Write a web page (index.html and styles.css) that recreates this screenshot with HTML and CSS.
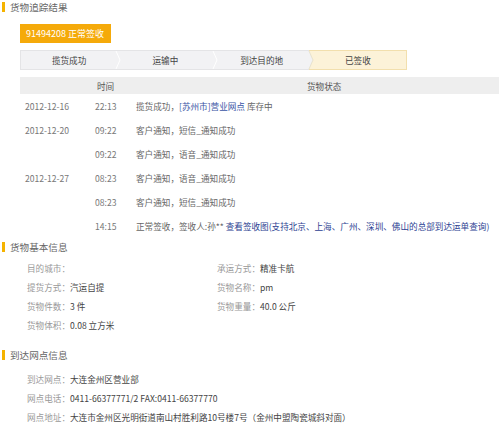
FILE: index.html
```html
<!DOCTYPE html>
<html lang="zh-CN">
<head>
<meta charset="utf-8">
<title>货物追踪结果</title>
<link rel="stylesheet" href="styles.css">
</head>
<body>
<div class="page">
  <div class="sec-title"><span class="bar"></span>货物追踪结果</div>
  <div class="track">
    <div class="badge">91494208 正常签收</div>
    <div class="steps">
      <div class="step">揽货成功</div>
      <svg class="sep" viewBox="0 0 8 20" preserveAspectRatio="none"><polygon points="0,0 3,0 7,10 3,20 0,20" fill="#f2f2f4"/><polyline points="3,0 7,10 3,20" fill="none" stroke="#ffffff" stroke-width="1"/></svg>
      <div class="step">运输中</div>
      <svg class="sep" viewBox="0 0 8 20" preserveAspectRatio="none"><polygon points="0,0 3,0 7,10 3,20 0,20" fill="#f2f2f4"/><polyline points="3,0 7,10 3,20" fill="none" stroke="#ffffff" stroke-width="1"/></svg>
      <div class="step">到达目的地</div>
      <svg class="sep sep-last" viewBox="0 0 8 20" preserveAspectRatio="none"><polygon points="0,0 3,0 7,10 3,20 0,20" fill="#f2f2f4"/><polyline points="3,0 7,10 3,20" fill="none" stroke="#e6e0cc" stroke-width="1"/></svg>
      <div class="step step-done">已签收</div>
    </div>
  </div>

  <div class="table">
    <div class="thead">
      <span></span>
      <span class="th-time">时间</span>
      <span class="th-status">货物状态</span>
    </div>
    <div class="row"><span class="date">2012-12-16</span><span class="time">22:13</span><span class="status">揽货成功，<a class="link">[苏州市]营业网点</a> 库存中</span></div>
    <div class="row"><span class="date">2012-12-20</span><span class="time">09:22</span><span class="status">客户通知，短信_通知成功</span></div>
    <div class="row"><span class="date"></span><span class="time">09:22</span><span class="status">客户通知，语音_通知成功</span></div>
    <div class="row"><span class="date">2012-12-27</span><span class="time">08:23</span><span class="status">客户通知，语音_通知成功</span></div>
    <div class="row"><span class="date"></span><span class="time">08:23</span><span class="status">客户通知，短信_通知成功</span></div>
    <div class="row"><span class="date"></span><span class="time">14:15</span><span class="status">正常签收，签收人:孙** <a class="link link-dark">查看签收图(支持北京、上海、广州、深圳、佛山的总部到达运单查询)</a></span></div>
  </div>

  <div class="sec-title sec2"><span class="bar"></span>货物基本信息</div>
  <div class="info info-2col">
    <div class="item"><span class="lbl">目的城市：</span></div>
    <div class="item"><span class="lbl">承运方式：</span><span class="val">精准卡航</span></div>
    <div class="item"><span class="lbl">提货方式：</span><span class="val">汽运自提</span></div>
    <div class="item"><span class="lbl">货物名称：</span><span class="val">pm</span></div>
    <div class="item"><span class="lbl">货物件数：</span><span class="val">3 件</span></div>
    <div class="item"><span class="lbl">货物重量：</span><span class="val">40.0 公斤</span></div>
    <div class="item"><span class="lbl">货物体积：</span><span class="val">0.08 立方米</span></div>
  </div>

  <div class="sec-title sec3"><span class="bar"></span>到达网点信息</div>
  <div class="info info-1col">
    <div class="item"><span class="lbl">到达网点：</span><span class="val">大连金州区营业部</span></div>
    <div class="item"><span class="lbl">网点电话：</span><span class="val">0411-66377771/2 FAX:0411-66377770</span></div>
    <div class="item"><span class="lbl">网点地址：</span><span class="val">大连市金州区光明街道南山村胜利路10号楼7号（金州中盟陶瓷城斜对面）</span></div>
  </div>
</div>
</body>
</html>
```

FILE: styles.css
```css
html, body {
  margin: 0;
  padding: 0;
  background: #ffffff;
}

body {
  font-family: "Noto Sans CJK SC", "Noto Sans", sans-serif;
  font-size: 8.6px;
  color: #666666;
  overflow: hidden;
}

.page {
  display: flex;
  flex-direction: column;
}

.sec-title {
  display: flex;
  align-items: center;
  height: 14px;
  font-size: 9.6px;
  color: #666666;
  padding-left: 2px;
}

.sec-title .bar {
  width: 3px;
  height: 10px;
  background: #f5b300;
  margin-right: 5px;
}

.sec2 { margin-top: 2px; }
.sec3 { margin-top: 14px; }

.track {
  padding-left: 20px;
  display: flex;
  flex-direction: column;
  align-items: flex-start;
}

.badge {
  margin-top: 10px;
  height: 19px;
  line-height: 19px;
  padding: 0 7px 0 6px;
  background: #f5aa0a;
  color: #ffffff;
  font-size: 9px;
}

.steps {
  margin-top: 7px;
  display: flex;
  width: 387px;
  height: 20px;
  box-sizing: border-box;
  border: 1px solid #e4e4e6;
  background: #f2f2f4;
}

.step {
  flex: 1;
  display: flex;
  align-items: center;
  justify-content: center;
  color: #444444;
}

.step-done {
  background: #fcf2d8;
  outline: 1px solid #f2dfad;
}

.sep {
  width: 8px;
  height: 18px;
  flex: none;
  margin: 0 -4px;
  position: relative;
  z-index: 1;
}

.sep-last {
  background: #fcf2d8;
}

.table {
  margin-top: 7px;
  margin-left: 20px;
}

.thead,
.row {
  display: grid;
  grid-template-columns: 70px 41px 1fr;
  padding-left: 5px;
  align-items: center;
}

.thead {
  height: 17px;
  background: #eeeeee;
  color: #555555;
}

.th-time { padding-left: 2px; }
.th-status { padding-left: 171px; }

.row {
  height: 24px;
  white-space: nowrap;
}

.date, .time {
  color: #777777;
}

.status {
  color: #666666;
}

.link {
  color: #3a55a5;
}

.link-dark {
  color: #2d3f92;
}

.info {
  display: grid;
  padding-left: 27px;
}

.info-2col {
  margin-top: 4px;
  grid-template-columns: 190px 1fr;
  grid-auto-rows: 19px;
}

.info-1col {
  margin-top: 7px;
  grid-template-columns: 1fr;
  grid-auto-rows: 19px;
}

.item {
  display: flex;
  align-items: center;
  white-space: nowrap;
}

.lbl {
  color: #999999;
}

.val {
  color: #444444;
}
```
